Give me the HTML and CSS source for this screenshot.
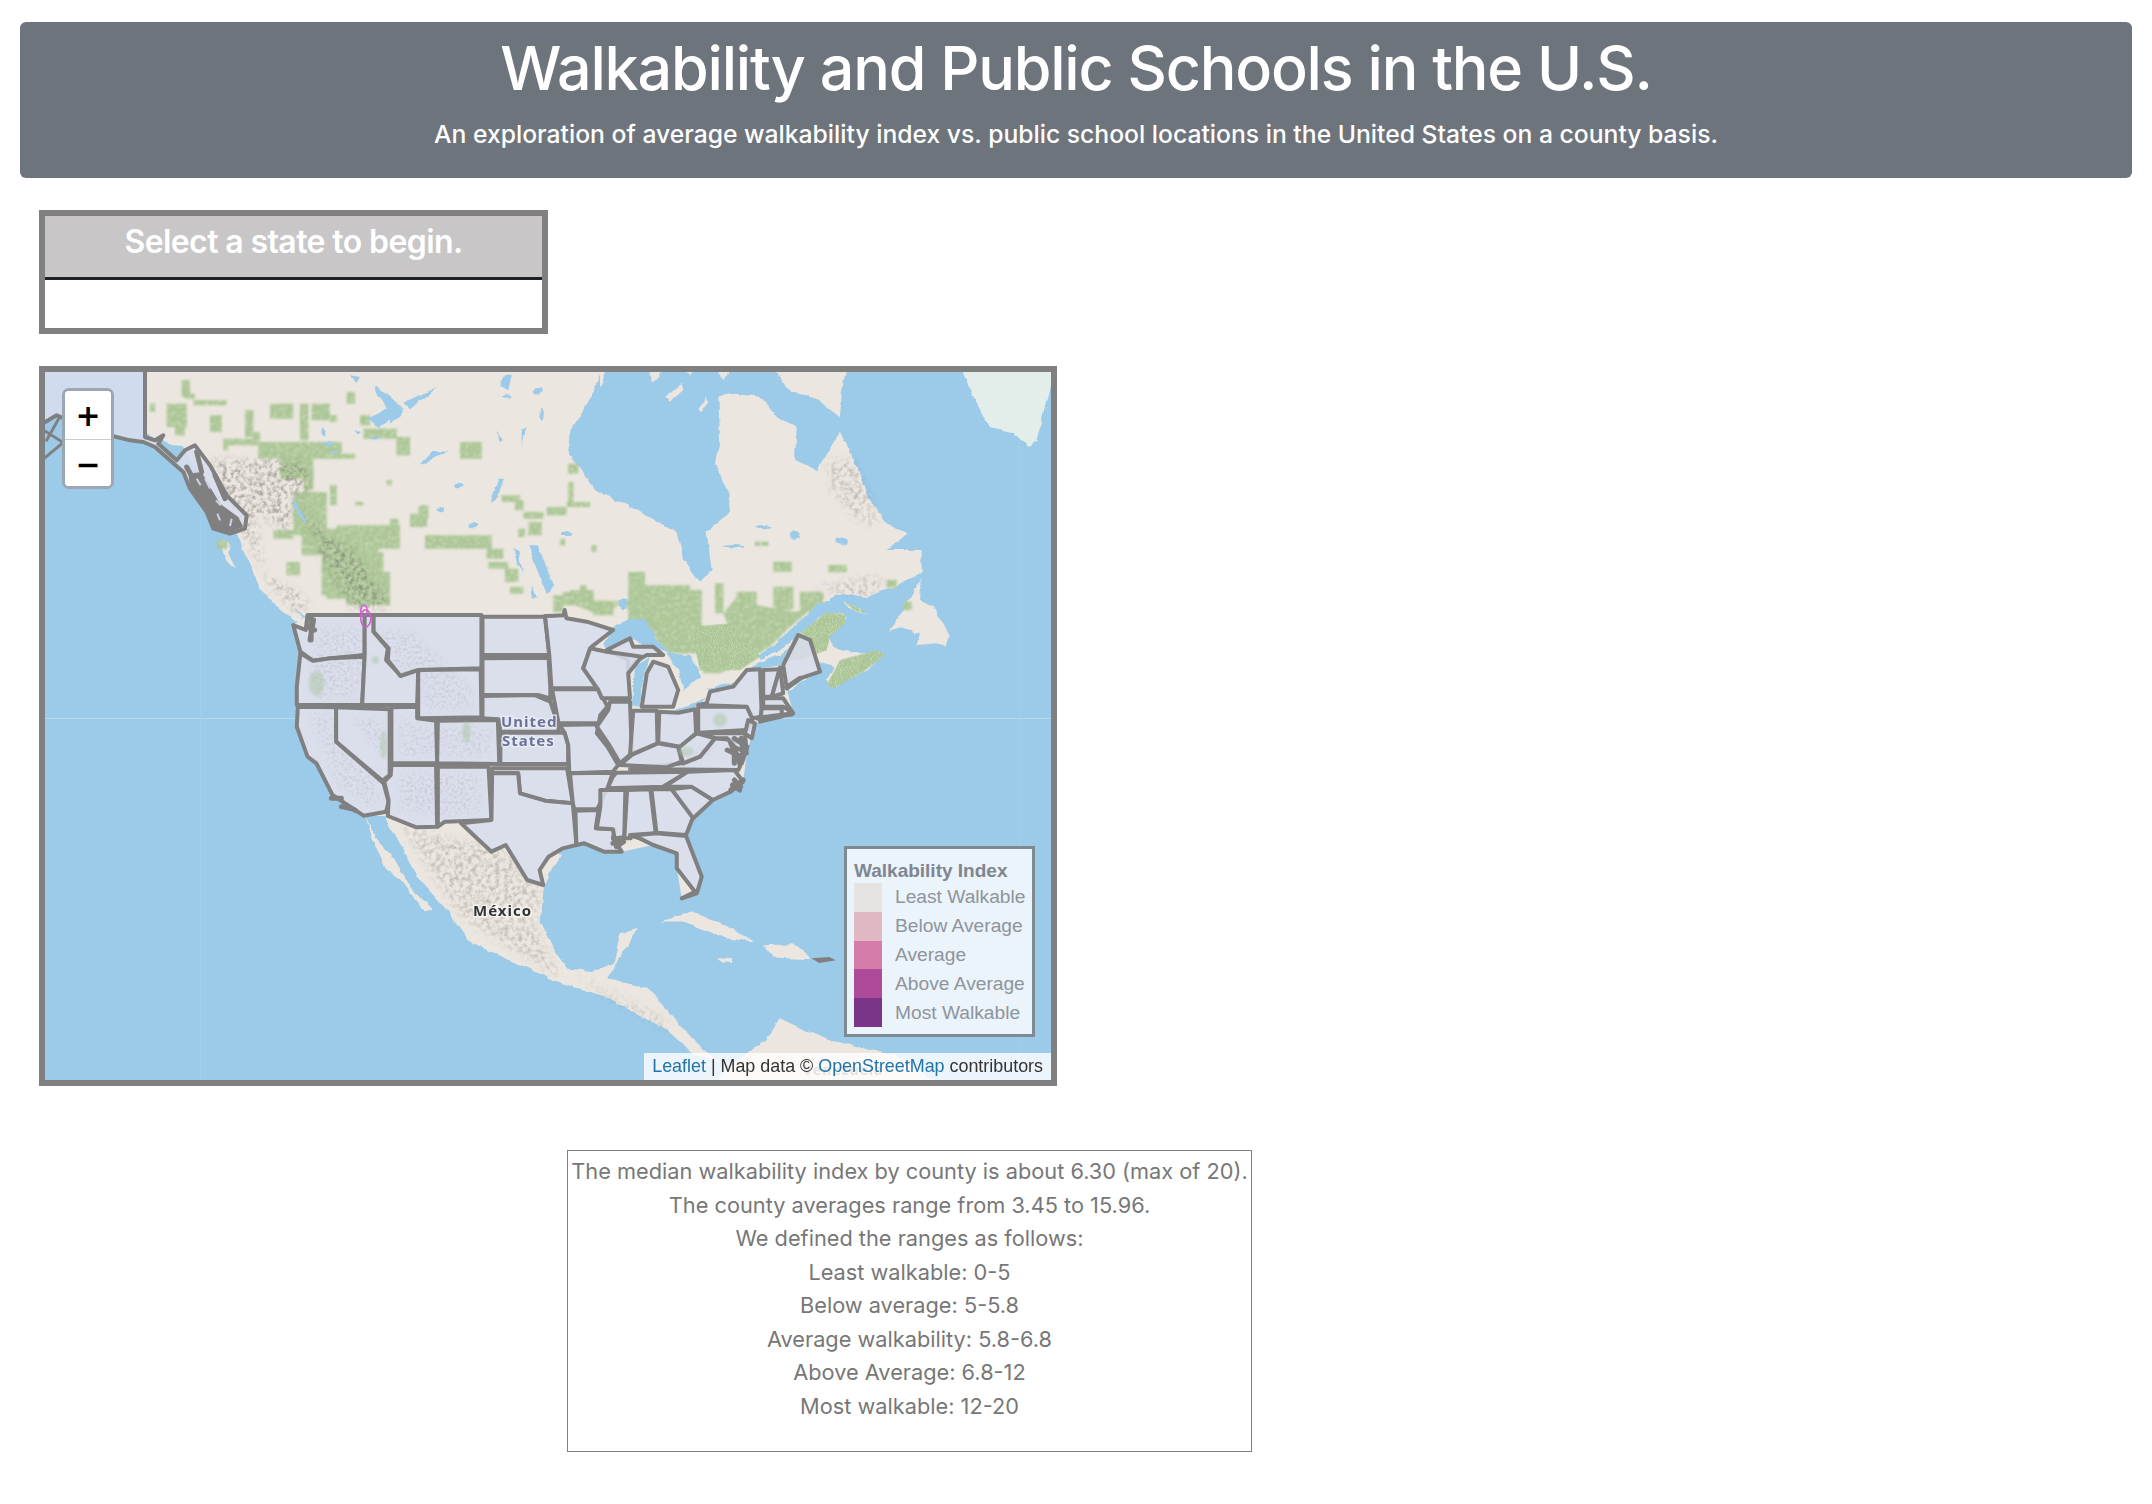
FILE: index.html
```html
<!DOCTYPE html>
<html lang="en">
<head>
    <meta charset="UTF-8">
    <title>Walkability and Public Schools in the U.S.</title>
    <link rel="stylesheet" href="styles.css">
</head>
<body>
    <header class="banner">
        <h1>Walkability and Public Schools in the U.S.</h1>
        <p>An exploration of average walkability index vs. public school locations in the United States on a county basis.</p>
    </header>

    <section class="state-panel">
        <h3>Select a state to begin.</h3>
        <div class="state-body"></div>
    </section>

    <section class="map-box">
        <svg class="map" viewBox="45 372 1006 708" aria-hidden="true">
            <defs>
                <filter id="rough" x="-5%" y="-5%" width="110%" height="110%" color-interpolation-filters="sRGB">
                    <feTurbulence type="fractalNoise" baseFrequency="0.09" numOctaves="3" seed="4" result="n"/>
                    <feDisplacementMap in="SourceGraphic" in2="n" scale="5" xChannelSelector="R" yChannelSelector="G"/>
                    <feGaussianBlur stdDeviation="0.6"/>
                </filter>
                <filter id="speckle" x="-5%" y="-5%" width="110%" height="110%" color-interpolation-filters="sRGB">
                    <feTurbulence type="fractalNoise" baseFrequency="0.22" numOctaves="3" seed="9" result="n"/>
                    <feColorMatrix in="n" type="matrix" values="0 0 0 0 0.42  0 0 0 0 0.41  0 0 0 0 0.38  2.6 0 0 0 -1.05" result="dots"/>
                    <feGaussianBlur in="SourceGraphic" stdDeviation="4" result="soft"/>
                    <feComposite in="dots" in2="soft" operator="in"/>
                    <feGaussianBlur stdDeviation="0.7"/>
                </filter>
                <filter id="speckle-wide" x="-10%" y="-10%" width="120%" height="120%" color-interpolation-filters="sRGB">
                    <feTurbulence type="fractalNoise" baseFrequency="0.12" numOctaves="3" seed="5" result="n"/>
                    <feColorMatrix in="n" type="matrix" values="0 0 0 0 0.42  0 0 0 0 0.42  0 0 0 0 0.46  2.4 0 0 0 -0.95" result="dots"/>
                    <feGaussianBlur in="SourceGraphic" stdDeviation="12" result="soft"/>
                    <feComposite in="dots" in2="soft" operator="in"/>
                    <feGaussianBlur stdDeviation="1"/>
                </filter>
                <filter id="leafy" x="-2%" y="-2%" width="104%" height="104%" color-interpolation-filters="sRGB">
                    <feTurbulence type="fractalNoise" baseFrequency="0.35" numOctaves="2" seed="2" result="n"/>
                    <feColorMatrix in="n" type="matrix" values="0 0 0 0 0.9  0 0 0 0 0.92  0 0 0 0 0.82  2.2 0 0 0 -1.05" result="dots"/>
                    <feComposite in="dots" in2="SourceGraphic" operator="in" result="flecks"/>
                    <feMerge result="m"><feMergeNode in="SourceGraphic"/><feMergeNode in="flecks"/></feMerge>
                    <feGaussianBlur in="m" stdDeviation="0.8"/>
                </filter>
                <filter id="soft"><feGaussianBlur stdDeviation="2.500"/></filter>
            </defs>

            <rect class="sea" x="45" y="372" width="1006" height="708"/>
            <path class="seam" d="M45 718.500H1051"/>
            <path class="seam-faint" d="M1019.500 372V1080M200.500 500V1080"/>

            <!-- land -->
            <g filter="url(#rough)">
                <g transform="translate(30 360) scale(.6633 .4719)">
                    <polygon class="land" points="175,10 865,10 845,80 815,150 810,195 835,240 850,275 905,310 975,365 985,420 1010,470 1040,540 1000,620 900,700 600,800 420,545 350,490 320,400 310,350 230,185 175,160"/>
                    <polygon class="land" points="500,940 533,966 561,1032 583,1095 628,1165 660,1230 720,1270 800,1320 870,1350 960,1420 1000,1470 1040,1490 1000,1440 965,1385 930,1330 870,1310 915,1205 890,1215 880,1280 850,1295 810,1290 790,1250 770,1190 775,1110 800,1050 700,950"/>
                    <polygon class="land" points="505,964 523,1017 547,1053 573,1117 608,1165 596,1170 562,1108 535,1074 517,1017"/>
                    <polygon class="land" points="950,1190 1000,1170 1050,1200 1092,1232 1050,1226 985,1190"/>
                    <polygon class="land" points="1105,1240 1150,1238 1178,1270 1120,1266"/>
                    <polygon class="land" points="1038,1268 1060,1270 1058,1278 1040,1276"/>
                    <polygon class="land" points="1010,1560 1060,1490 1110,1440 1130,1395 1200,1440 1300,1470 1400,1560"/>
                </g>
                <g transform="translate(130 372) scale(.33333)">
                    <polygon class="land" points="390,650 430,660 520,735 510,755 450,710"/>
                    <polygon class="land" points="262,505 300,510 295,545 320,595 290,565"/>
                </g>
                <g transform="translate(600 360) scale(.33333)">
                    <polygon class="land" points="300,665 335,630 320,515 390,460 385,400 345,310 360,240 355,110 390,100 480,110 530,170 590,200 585,300 650,330 720,215 770,320 810,420 860,490 920,520 860,570 965,570 965,640 880,680 800,712 730,700 650,730 590,790 530,870 450,925 400,990 200,990 100,800 180,700"/>
                    <polygon class="land" points="0,30 18,30 8,75 0,80"/>
                    <polygon class="land" points="150,30 190,30 170,58 155,68"/>
                    <polygon class="land" points="260,30 285,30 270,45"/>
                    <polygon class="land" points="350,30 395,30 370,60"/>
                    <polygon class="land" points="195,110 245,75 250,90 215,122"/>
                    <polygon class="land" points="296,150 318,110 322,130 305,156"/>
                    <polygon class="land" points="520,20 740,20 725,100 720,172 640,110 570,95"/>
                    <polygon class="ice" points="1080,20 1360,20 1345,100 1310,240 1290,258 1240,220 1170,205 1130,130"/>
                    <polygon class="land" points="870,815 920,730 965,655 960,720 1000,740 1030,790 1050,830 1040,860 1010,850 950,855 960,820 900,805"/>
                </g>
                <g transform="translate(570 590) scale(.33333)">
                    <polygon class="land" points="0,0 780,0 780,30 640,190 520,240 410,310 340,345 300,190 0,170"/>
                </g>
            </g>
            <!-- plain land under the state layer, so its tint stays even -->
            <polygon class="land" transform="translate(270 590) scale(.35714 .33333)" points="105,75 830,75 960,120 1100,180 1335,240 1437,225 1479,135 1512,150 1540,245 1447,295 1465,370 1358,400 1335,490 1325,575 1240,630 1185,685 1165,738 1209,860 1195,910 1153,925 1139,835 1139,790 1073,765 985,785 935,785 880,760 858,765 820,775 780,800 755,840 765,885 720,870 660,765 620,785 575,740 535,700 410,712 330,678 262,677 175,615 130,520 105,500 75,410 75,290 85,190 65,105"/>

            <!-- forest and mountains on the base map -->
            <g class="forest" filter="url(#leafy)">
                <path transform="translate(130 372) scale(.33333)" d="M155 25h25v50h-25zM165 65h30v15h-30zM190 85h100v15h-100zM110 95h60v70h-60zM135 160h30v30h-30zM60 95h15v25h-15zM240 130h35v50h-35zM345 115h25v80h-25zM370 180h20v40h-20zM280 200h110v20h-110zM280 220h15v15h-15zM385 210h250v50h-250zM420 95h70v45h-70zM510 95h25v110h-25zM545 95h55v50h-55zM600 130h20v20h-20zM650 60h25v35h-25zM690 130h30v30h-30zM700 170h100v30h-100zM800 195h40v50h-40zM635 245h40v15h-40zM450 260h100v60h-100zM520 315h30v40h-30zM490 360h100v130h-100zM600 340h20v60h-20zM620 460h190v70h-190zM515 480h60v70h-60zM575 470h170v200h-170zM700 540h60v110h-60zM840 430h50v30h-50zM870 400h25v40h-25zM770 325h15v15h-15zM675 390h25v10h-25zM430 475h60v25h-60zM470 570h40v40h-40zM650 600h130v100h-130zM590 620h60v60h-60zM885 490h15v30h-15zM262 505h30v25h-30z"/>
                <path transform="translate(390 372) scale(.33333)" d="M20 195h40v55h-40zM210 210h65v50h-65zM105 490h200v40h-200zM60 425h50v40h-50zM85 405h25v30h-25zM0 440h25v45h-25zM335 370h55v20h-55zM375 385h25v30h-25zM400 420h60v20h-60zM415 450h40v40h-40zM385 470h20v25h-20zM470 405h60v25h-60zM530 390h70v15h-70zM535 330h15v60h-15zM535 275h30v30h-30zM290 530h50v30h-50zM295 570h60v20h-60zM345 590h40v40h-40zM360 645h40v20h-40zM510 500h15v20h-15zM605 520h15v20h-15zM490 670h30v50h-30zM520 660h90v40h-90zM570 640h20v20h-20zM610 700h60v30h-60zM715 600h50v40h-50zM715 640h185v140h-185z"/>
                <polygon transform="translate(570 590) scale(.33333)" points="0,0 70,0 70,30 160,35 180,70 230,100 265,160 300,190 395,190 395,0 180,0 175,30 90,75 0,40"/>
                <path transform="translate(600 360) scale(.33333)" d="M345 670h25v90h-25zM410 695h60v60h-60zM520 680h60v70h-60zM600 695h70v60h-70zM520 605h55v30h-55zM685 615h55v22h-55zM465 545h40v12h-40zM860 660h30v25h-30zM910 725h25v25h-25z"/>
                <polygon transform="translate(570 590) scale(.33333)" points="460,70 510,10 560,45 610,55 670,65 720,60 650,120 600,170 520,215 450,250 400,250 385,190 410,160 490,150"/>
            </g>
            <g class="rock" filter="url(#speckle)">
                <g transform="translate(130 372) scale(.33333)">
                    <polygon points="240,265 455,265 535,320 535,365 490,360 480,480 370,420 400,600 540,690 500,720 420,640 350,500 300,400"/>
                    <polygon points="490,370 560,470 680,540 780,700 680,720 600,600 540,480"/>
                    <polygon points="470,265 520,270 540,320 480,310"/>
                </g>
            </g>
            <g class="rock-faint" filter="url(#speckle)">
                <g transform="translate(30 360) scale(.6633 .4719)">
                    <polygon points="560,990 720,1040 770,1130 760,1200 800,1310 740,1260 650,1180"/>
                    <polygon points="820,1300 960,1400 960,1420 860,1340"/>
                </g>
                <g transform="translate(600 360) scale(.33333)">
                    <polygon points="680,305 765,300 810,420 830,500 760,470 700,400"/>
                    <polygon points="640,690 790,650 860,660 800,710 700,700"/>
                </g>
            </g>

            <!-- water on top of the land -->
            <g filter="url(#rough)">
                <g class="sea" transform="translate(570 590) scale(.33333)">
                    <polygon points="100,165 130,115 180,85 225,85 265,160 300,190 230,172 190,150 130,175 110,185"/>
                    <polygon points="185,350 195,230 240,200 215,280 210,350"/>
                    <polygon points="290,190 360,195 395,260 340,300 325,240"/>
                    <polygon points="315,360 415,322 380,350 340,372"/>
                    <polygon points="405,300 490,275 490,292 420,302"/>
                    <ellipse cx="160" cy="42" rx="13" ry="16"/>
                </g>
                <g class="sea" transform="translate(600 360) scale(.33333)">
                    <polygon points="880,690 800,715 730,705 650,735 585,795 520,860 470,885 480,900 540,870 600,825 680,765 735,770 830,800 860,690"/>
                    <ellipse cx="265" cy="595" rx="18" ry="10"/>
                    <ellipse cx="625" cy="225" rx="8" ry="12"/>
                    <ellipse cx="490" cy="500" rx="24" ry="5"/>
                    <ellipse cx="725" cy="545" rx="22" ry="9"/>
                    <ellipse cx="585" cy="525" rx="15" ry="12"/>
                    <ellipse cx="400" cy="560" rx="30" ry="5"/>
                </g>
                <g class="sea" transform="translate(130 372) scale(.33333)">
                    <polygon points="730,40 780,70 820,110 750,165 710,140 770,110"/>
                    <polygon points="660,10 690,15 680,32"/>
                    <polygon points="490,380 530,450 525,455 490,400"/>
                    <ellipse cx="595" cy="215" rx="20" ry="4"/>
                    <ellipse cx="610" cy="238" rx="16" ry="3"/>
                    <ellipse cx="580" cy="180" rx="6" ry="10"/>
                    <ellipse cx="685" cy="180" rx="7" ry="5"/>
                    <ellipse cx="735" cy="198" rx="18" ry="4"/>
                </g>
                <g class="sea" transform="translate(390 372) scale(.33333)">
                    <polygon points="415,520 445,520 490,640 470,665 440,590"/>
                    <polygon points="325,320 342,320 320,385 300,395"/>
                    <polygon points="90,275 130,235 175,240 130,255 100,280"/>
                    <polygon points="335,15 365,8 355,55 335,45"/>
                    <polygon points="0,85 40,120 0,155"/>
                    <polygon points="40,92 140,45 60,112"/>
                    <polygon points="395,175 410,165 395,220"/>
                    <polygon points="320,175 335,205 325,210"/>
                    <polygon points="370,530 385,540 400,610 380,570"/>
                    <polygon points="425,635 440,680 425,680"/>
                    <ellipse cx="700" cy="695" rx="12" ry="17"/>
                    <ellipse cx="445" cy="55" rx="14" ry="10"/>
                    <ellipse cx="455" cy="125" rx="6" ry="18"/>
                    <ellipse cx="350" cy="75" rx="14" ry="5"/>
                    <ellipse cx="205" cy="342" rx="12" ry="7"/>
                    <ellipse cx="250" cy="458" rx="12" ry="8"/>
                    <ellipse cx="150" cy="415" rx="12" ry="6"/>
                    <ellipse cx="530" cy="485" rx="14" ry="7"/>
                </g>
                <g transform="translate(600 360) scale(.33333)">
                    <polygon class="land" points="540,920 600,820 680,760 730,760 735,780 690,830 700,860 720,870 770,880 850,880 800,930 700,985 680,960 700,920 640,900 660,930 570,990"/>
                    <polygon class="land" points="730,728 760,735 802,762 770,756"/>
                </g>
            </g>
            <g class="forest" filter="url(#leafy)" transform="translate(600 360) scale(.33333)">
                <polygon points="560,900 600,820 680,757 735,762 735,790 690,830 680,870 600,900"/>
                <polygon points="680,975 720,900 830,870 855,885 790,935 700,985"/>
                <polygon points="735,730 760,737 800,760 770,754"/>
                <polygon points="270,800 400,790 480,890 420,930 300,930"/>
                <polygon points="300,860 390,850 395,900 300,905"/>
            </g>

            <!-- US states layer -->
            <g transform="translate(130 372) scale(.33333)">
                <polygon class="state" points="-280,-10 45,-10 45,195 75,205 100,190 85,215 140,265 165,235 195,220 240,280 290,370 350,430 345,470 300,485 250,470 230,420 180,350 160,300 120,265 75,225 40,210 0,205 -100,180 -220,130 -280,165"/>
                <polygon class="grey-isle" points="175,305 215,300 240,345 270,395 325,435 340,465 300,480 255,472 225,415 180,345"/>
                <g class="lines thick">
                    <path d="M200 240L215 300M170 285L195 330M255 310L285 380"/>
                </g>
                <g class="slits">
                    <path d="M225 320L240 350M258 385L272 400M305 440L300 462M262 425L270 445M200 320L212 340"/>
                </g>
            </g>
            <g class="lines" transform="translate(30 360) scale(.6633 .4719)">
                <path d="M20 210L50 175L22 150M25 170L45 120"/>
                <polygon class="grey-isle" points="1178,1268 1205,1265 1215,1272 1190,1278"/>
            </g>
            <g transform="translate(270 590) scale(.35714 .33333)">
                <polygon class="state" points="105,75 265,75 265,195 170,205 120,212 85,185 65,105 100,120"/>
                <polygon class="state" points="85,190 120,212 170,205 265,200 262,260 258,345 75,345 75,290"/>
                <polygon class="state" points="265,75 290,75 290,125 330,175 325,210 365,255 415,240 412,345 258,345 262,260 265,195"/>
                <polygon class="state" points="290,75 592,75 592,235 415,240 365,258 330,210 332,175 290,125"/>
                <polygon class="state" points="415,240 590,238 592,382 415,385"/>
                <polygon class="state" points="595,80 770,80 782,195 595,195"/>
                <polygon class="state" points="595,205 780,203 785,295 785,325 750,315 595,315"/>
                <polygon class="state" points="595,318 740,315 785,335 805,400 808,425 645,425 640,388 595,385"/>
                <polygon class="state" points="770,78 822,76 825,60 830,85 887,95 961,120 901,170 877,235 919,295 788,295 782,195"/>
                <polygon class="state" points="790,298 920,298 945,350 925,375 920,400 808,400"/>
                <polygon class="state" points="645,428 825,428 835,465 835,522 645,522"/>
                <polygon class="state" points="810,405 920,403 915,430 945,470 975,525 960,545 838,550 835,465 825,428"/>
                <polygon class="state" points="470,392 638,390 642,522 468,520"/>
                <polygon class="state" points="340,352 412,350 412,385 465,392 468,520 340,520"/>
                <polygon class="state" points="185,352 335,358 335,555 315,572 185,455"/>
                <polygon class="state" points="78,350 185,352 185,455 318,580 332,635 325,665 262,677 175,615 130,520 105,500 75,410"/>
                <polygon class="state" points="340,525 465,525 468,710 410,712 330,678 332,630 320,575 338,555"/>
                <polygon class="state" points="470,530 612,530 620,690 490,695 470,710"/>
                <polygon class="state" points="622,535 832,535 848,640 770,632 700,610 695,550 622,548"/>
                <polygon class="state" points="622,550 695,550 700,610 770,632 848,640 858,765 820,775 780,800 755,840 765,885 720,870 660,765 620,785 575,740 535,700 620,690"/>
                <polygon class="state" points="840,550 960,548 945,595 920,650 915,658 852,658 848,640"/>
                <polygon class="state" points="855,662 920,660 912,715 965,718 960,745 985,785 935,785 880,760 858,765"/>
                <polygon class="state" points="925,600 995,600 992,742 965,745 960,718 915,715 925,650"/>
                <polygon class="state" points="1000,600 1065,598 1080,730 1008,735 1010,745 992,745"/>
                <polygon class="state" points="1068,598 1125,598 1185,680 1165,735 1082,728"/>
                <polygon class="state" points="1010,737 1082,730 1165,738 1209,860 1195,910 1153,925 1190,905 1139,835 1139,790 1073,765 1035,745"/>
                <polygon class="state" points="1125,598 1180,590 1240,630 1185,685"/>
                <polygon class="state" points="970,548 1170,545 1100,590 945,595 960,560"/>
                <polygon class="state" points="1170,545 1300,540 1325,575 1290,605 1240,630 1180,590 1105,590"/>
                <polygon class="state" points="1008,537 1153,520 1204,500 1246,445 1297,450 1316,530 1311,540"/>
                <polygon class="state" points="980,525 1013,495 1085,460 1143,470 1153,515 1110,532"/>
                <polygon class="state" points="1143,470 1195,430 1246,445 1204,500 1157,520"/>
                <polygon class="state" points="952,335 1008,335 1013,490 980,520 947,460 915,410 947,360"/>
                <polygon class="state" points="1017,362 1083,362 1085,460 1008,495"/>
                <polygon class="state" points="1090,365 1143,368 1190,358 1193,430 1148,470 1087,458"/>
                <polygon class="state" points="1041,350 1055,250 1073,215 1115,230 1143,300 1129,350"/>
                <polygon class="state" points="943,180 1008,145 1017,170 1073,170 1101,195 1055,195 1022,215 1003,250 1003,210"/>
                <polygon class="state" points="896,175 877,235 919,300 929,325 1008,325 1003,250 1041,200 943,185"/>
                <polygon class="state" points="1199,350 1335,350 1353,385 1335,420 1199,428"/>
                <polygon class="state" points="1223,340 1232,305 1297,290 1335,240 1372,238 1377,380 1350,385 1335,350 1199,345"/>
                <polygon class="state" points="1381,240 1428,238 1405,320 1381,320"/>
                <polygon class="state" points="1428,232 1437,310 1405,320"/>
                <polygon class="state" points="1437,225 1479,135 1512,150 1540,245 1484,265 1447,295"/>
                <polygon class="state" points="1381,325 1437,325 1465,370 1437,350 1381,350"/>
                <polygon class="state" points="1377,355 1433,355 1433,380 1372,395"/>
                <polygon class="state" points="1339,390 1358,400 1349,445 1330,430"/>
                <polygon class="state" points="1199,430 1330,430 1335,490 1300,470 1280,445 1250,445"/>
                <!-- faint relief showing through the state tint -->
                <g class="us-rock" filter="url(#speckle-wide)">
                    <polygon points="130,110 255,110 270,180 250,330 130,330 110,250"/>
                    <polygon points="300,120 400,120 570,300 570,360 430,360 420,260 350,230"/>
                    <polygon points="110,370 180,370 190,460 300,570 310,640 270,650 190,590"/>
                    <polygon points="220,380 320,380 320,510"/>
                    <polygon points="360,380 450,410 620,410 620,500 360,500"/>
                    <polygon points="360,550 590,550 590,670 480,680 360,660"/>
                    <polygon points="1130,525 1240,455 1260,470 1160,545"/>
                    <polygon points="990,575 1120,555 1090,580"/>
                </g>
                <g class="lines thick">
                    <path d="M115 85V150M122 90L112 150M105 110L125 120"/>
                    <path d="M1290 460L1310 510M1320 445L1325 500M1300 445L1335 470L1320 520M1280 480L1320 500M1300 480L1300 520"/>
                    <path d="M1290 600L1325 570M1300 570L1318 590M1295 585L1315 600"/>
                    <path d="M1367 385L1460 372M1484 265L1447 292"/>
                    <path d="M172 625H200M200 650L235 658M212 645L240 662"/>
                    <path d="M960 760L985 745M970 770L990 755"/>
                </g>
                <g class="pink">
                    <ellipse cx="263" cy="62" rx="9" ry="16"/>
                    <ellipse cx="268" cy="85" rx="14" ry="26"/>
                </g>
                <g class="us-green" filter="url(#soft)">
                    <ellipse cx="130" cy="280" rx="22" ry="38"/>
                    <ellipse cx="550" cy="425" rx="12" ry="32"/>
                    <ellipse cx="318" cy="465" rx="10" ry="42"/>
                    <ellipse cx="1260" cy="390" rx="20" ry="22"/>
                    <ellipse cx="295" cy="210" rx="10" ry="12"/>
                    <ellipse cx="1165" cy="485" rx="20" ry="14"/>
                </g>
            </g>

            <text class="label-us" x="501" y="727">United</text>
            <text class="label-us" x="502" y="746">States</text>
            <text class="label-mx" x="473" y="916">México</text>
            <text class="label-ve" x="803" y="1075">Venezuela</text>
        </svg>

        <div class="zoom-control">
            <button class="zoom-btn">+</button>
            <button class="zoom-btn">−</button>
        </div>

        <div class="legend">
            <h4>Walkability Index</h4>
            <div class="legend-row"><i class="swatch s1"></i>Least Walkable</div>
            <div class="legend-row"><i class="swatch s2"></i>Below Average</div>
            <div class="legend-row"><i class="swatch s3"></i>Average</div>
            <div class="legend-row"><i class="swatch s4"></i>Above Average</div>
            <div class="legend-row"><i class="swatch s5"></i>Most Walkable</div>
        </div>

        <div class="attribution"><a href="#">Leaflet</a> | Map data © <a href="#">OpenStreetMap</a> contributors</div>
    </section>

    <section class="info-box">
        <p>The median walkability index by county is about 6.30 (max of 20).</p>
        <p>The county averages range from 3.45 to 15.96.</p>
        <p>We defined the ranges as follows:</p>
        <p>Least walkable: 0-5</p>
        <p>Below average: 5-5.8</p>
        <p>Average walkability: 5.8-6.8</p>
        <p>Above Average: 6.8-12</p>
        <p>Most walkable: 12-20</p>
    </section>
</body>
</html>
```

FILE: styles.css
```css
* {
    box-sizing: border-box;
}
body {
    margin: 0;
    padding: 22px 20px 52px;
    background-color: #fff;
    color: #777;
    font-family: Inter, "Liberation Sans", sans-serif;
}

.banner {
    height: 156px;
    padding-top: 9px;
    background-color: #6e747c;
    border-radius: 6px;
    color: #fff;
    text-align: center;
}
.banner h1 {
    margin: 0;
    font-size: 61px;
    line-height: 74px;
    font-weight: 500;
    letter-spacing: -1.2px;
}
.banner p {
    margin: 14px 0 0;
    font-size: 24.700px;
    line-height: 30px;
    font-weight: 500;
}

.state-panel {
    width: 509px;
    height: 124px;
    margin: 32px 0 0 19px;
    border: 6px solid #808080;
}
.state-panel h3 {
    height: 64px;
    margin: 0;
    padding-top: 6px;
    background-color: #c8c6c7;
    border-bottom: 3px solid #1d2125;
    color: #fff;
    font-size: 32px;
    line-height: 40px;
    font-weight: 600;
    letter-spacing: -0.600px;
    text-align: center;
}

.map-box {
    position: relative;
    width: 1018px;
    height: 720px;
    margin: 32px 0 0 19px;
    border: 6px solid #808080;
    overflow: hidden;
}
.map {
    display: block;
    width: 100%;
    height: 100%;
}
.sea { fill: #9ccae9; }
.seam {
    fill: none;
    stroke: #b8d8ee;
    stroke-width: 1;
}
.seam-faint {
    fill: none;
    stroke: #a3cfeb;
    stroke-width: 1;
}
.land { fill: #ebe6df; }
.ice { fill: #e3eeeb; }
.rock { opacity: 0.5; }
.rock-faint { opacity: 0.32; }
.us-rock { opacity: 0.16; }
.rock polygon, .rock-faint polygon, .us-rock polygon { fill: #000; }
.forest, .forest path, .forest polygon { fill: #aac595; }
.state {
    fill: #d8ddee;
    fill-opacity: 0.86;
    stroke: #808080;
    stroke-width: 4;
    stroke-linejoin: round;
    vector-effect: non-scaling-stroke;
}
.lines path {
    fill: none;
    stroke: #808080;
    stroke-width: 3;
    stroke-linecap: round;
    vector-effect: non-scaling-stroke;
}
.lines.thick path { stroke-width: 5; }
.slits path {
    fill: none;
    stroke: #ccd2e4;
    stroke-width: 2;
    vector-effect: non-scaling-stroke;
}
.grey-isle { fill: #808080; }
.pink ellipse {
    fill: none;
    stroke: #cf5fd0;
    stroke-width: 1.500;
    vector-effect: non-scaling-stroke;
}
.us-green ellipse { fill: #a9c4a0; opacity: 0.45; }

.label-us, .label-mx, .label-ve {
    font-family: "Noto Sans", sans-serif;
    font-size: 15px;
    font-weight: 700;
    letter-spacing: 1px;
}
.label-us {
    fill: #6d7396;
    paint-order: stroke;
    stroke: rgba(235, 238, 248, 0.8);
    stroke-width: 3px;
}
.label-mx {
    fill: #333;
    paint-order: stroke;
    stroke: rgba(255, 255, 255, 0.7);
    stroke-width: 3px;
}
.label-ve { fill: #777; font-size: 14px; }

.zoom-control {
    position: absolute;
    top: 16px;
    left: 17px;
    width: 52px;
    border: 3px solid #9da6b5;
    border-radius: 7px;
    background-color: #fff;
    overflow: hidden;
}
.zoom-btn {
    display: block;
    width: 100%;
    height: 47.500px;
    padding: 0;
    border: 0;
    background-color: #fff;
    color: #000;
    font-family: "DejaVu Sans", sans-serif;
    font-size: 30px;
    line-height: 50px;
    font-weight: 700;
}
.zoom-btn + .zoom-btn {
    border-top: 1px solid #ccc;
}

.legend {
    position: absolute;
    top: 474px;
    left: 799px;
    width: 191px;
    height: 191px;
    padding: 9px 0 0 7px;
    border: 3px solid #808a91;
    background-color: #ebf3fb;
    color: #8e959c;
    font-family: "Liberation Sans", sans-serif;
    font-size: 19.200px;
}
.legend h4 {
    margin: 0;
    font-size: 19px;
    line-height: 25px;
    font-weight: 700;
    color: #7e8690;
}
.legend-row {
    display: flex;
    align-items: center;
    height: 28.800px;
    white-space: nowrap;
}
.swatch {
    width: 28px;
    height: 100%;
    margin-right: 13px;
}
.s1 { background-color: #e6e3e3; }
.s2 { background-color: #e0b8c3; }
.s3 { background-color: #d67cab; }
.s4 { background-color: #ae4a9a; }
.s5 { background-color: #7a3488; }

.attribution {
    position: absolute;
    right: 0;
    bottom: 0;
    height: 27px;
    padding: 0 8px;
    background-color: rgba(255, 255, 255, 0.8);
    color: #333;
    font-family: "Liberation Sans", sans-serif;
    font-size: 17.900px;
    line-height: 27px;
    white-space: nowrap;
}
.attribution a {
    color: #2274a8;
    text-decoration: none;
}

.info-box {
    width: 685px;
    height: 302px;
    margin: 64px 0 0 547px;
    padding-top: 4px;
    border: 1px solid #808080;
    text-align: center;
}
.info-box p {
    margin: 0;
    font-size: 21.750px;
    line-height: 33.500px;
    white-space: nowrap;
}
```
